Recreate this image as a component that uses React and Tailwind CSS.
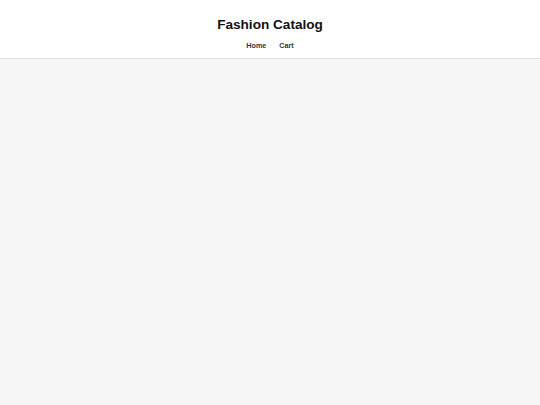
import React from "react";

const App = () => {
  return (
    <div
      className="min-h-screen bg-[#f7f7f7]"
      style={{ fontFamily: '"Liberation Sans", Arial, sans-serif' }}
    >
      {/* Header */}
      <header className="bg-white border-b border-[#e3e3e3] h-[59px] flex flex-col items-center pt-[17px]">
        <h1 className="text-[13.6px] leading-[16px] font-bold text-[#111]">
          Fashion Catalog
        </h1>
        <nav className="mt-[8.5px] flex gap-[13px] text-[7.2px] leading-[8px] font-bold text-[#333]">
          <a href="#">Home</a>
          <a href="#">Cart</a>
        </nav>
      </header>
    </div>
  );
};

export default App;
